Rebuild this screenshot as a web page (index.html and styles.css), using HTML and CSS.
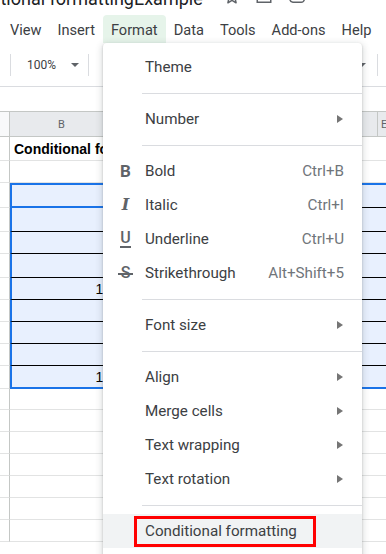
FILE: index.html
```html
<!DOCTYPE html>
<html lang="en">
<head>
    <meta charset="UTF-8">
    <meta name="viewport" content="width=device-width, initial-scale=1.0">
    <title>Format menu</title>

    <link rel="stylesheet" href="styles.css">
</head>
<body>
    <div class="app">
        <div class="doc-title">
            <span class="doc-name">Conditional formattingExample</span>
            <span class="doc-icons">
                <svg width="18" height="18" viewBox="0 0 24 24"><path d="M12 3.5l2.6 5.6 6 .6-4.5 4 1.3 6-5.4-3.2-5.4 3.2 1.3-6-4.5-4 6-.6z" fill="none" stroke="#5f6368" stroke-width="2" stroke-linejoin="round"/></svg>
                <svg width="20" height="18" viewBox="0 0 24 24"><path d="M3 6h6l2 2h10v11H3z" fill="none" stroke="#5f6368" stroke-width="2"/></svg>
                <svg width="20" height="18" viewBox="0 0 24 24"><path d="M6.5 19h11a4 4 0 0 0 .4-8A6 6 0 0 0 6.6 9.5 4.8 4.8 0 0 0 6.5 19z" fill="none" stroke="#5f6368" stroke-width="2"/></svg>
            </span>
        </div>

        <div class="menubar">
            <span class="menubar-item">View</span>
            <span class="menubar-item">Insert</span>
            <span class="menubar-item active">Format</span>
            <span class="menubar-item">Data</span>
            <span class="menubar-item">Tools</span>
            <span class="menubar-item">Add-ons</span>
            <span class="menubar-item">Help</span>
        </div>

        <div class="toolbar">
            <span class="tb-sep"></span>
            <span class="tb-zoom">100%</span>
            <span class="tb-caret"></span>
            <span class="tb-sep"></span>
            <span class="tb-caret tb-right"></span>
            <span class="tb-sep"></span>
        </div>

        <div class="formula-bar"></div>

        <div class="sheet">
            <div class="row header">
                <div class="rh"></div>
                <div class="col-head col-b">B</div>
                <div class="col-head col-c"></div>
                <div class="col-head col-d"></div>
                <div class="col-head col-e">E</div>
            </div>
            <div class="row h24">
                <div class="rh"></div>
                <div class="cell col-b title-cell"><span class="clip">Conditional formatting</span></div>
                <div class="cell rest"></div>
            </div>
            <div class="row h22">
                <div class="rh"></div>
                <div class="cell col-b"></div>
                <div class="cell rest"></div>
            </div>

            <div class="row h25 sel sel-first">
                <div class="rh"></div>
                <div class="cell col-b active-cell"></div>
                <div class="cell rest"></div>
            </div>
            <div class="row h24 sel">
                <div class="rh"></div>
                <div class="cell col-b"></div>
                <div class="cell rest"></div>
            </div>
            <div class="row h22 sel">
                <div class="rh"></div>
                <div class="cell col-b"></div>
                <div class="cell rest"></div>
            </div>
            <div class="row h24 sel">
                <div class="rh"></div>
                <div class="cell col-b"></div>
                <div class="cell rest"></div>
            </div>
            <div class="row h22 sel">
                <div class="rh"></div>
                <div class="cell col-b num">10</div>
                <div class="cell rest"></div>
            </div>
            <div class="row h22 sel">
                <div class="rh"></div>
                <div class="cell col-b"></div>
                <div class="cell rest"></div>
            </div>
            <div class="row h22 sel">
                <div class="rh"></div>
                <div class="cell col-b"></div>
                <div class="cell rest"></div>
            </div>
            <div class="row h22 sel">
                <div class="rh"></div>
                <div class="cell col-b"></div>
                <div class="cell rest"></div>
            </div>
            <div class="row h23 sel sel-last">
                <div class="rh"></div>
                <div class="cell col-b num">10</div>
                <div class="cell rest"></div>
            </div>

            <div class="row h21">
                <div class="rh"></div>
                <div class="cell col-b"></div>
                <div class="cell rest"></div>
            </div>
            <div class="row h22">
                <div class="rh"></div>
                <div class="cell col-b"></div>
                <div class="cell rest"></div>
            </div>
            <div class="row h22">
                <div class="rh"></div>
                <div class="cell col-b"></div>
                <div class="cell rest"></div>
            </div>
            <div class="row h22">
                <div class="rh"></div>
                <div class="cell col-b"></div>
                <div class="cell rest"></div>
            </div>
            <div class="row h22">
                <div class="rh"></div>
                <div class="cell col-b"></div>
                <div class="cell rest"></div>
            </div>
            <div class="row h22">
                <div class="rh"></div>
                <div class="cell col-b"></div>
                <div class="cell rest"></div>
            </div>
            <div class="row h22">
                <div class="rh"></div>
                <div class="cell col-b"></div>
                <div class="cell rest"></div>
            </div>
        </div>

        <!-- Format dropdown -->
        <div class="menu">
            <div class="menu-item">
                <span class="mi-icon"></span>
                <span class="mi-label">Theme</span>
            </div>
            <div class="menu-sep"></div>
            <div class="menu-item">
                <span class="mi-icon"></span>
                <span class="mi-label">Number</span>
                <span class="mi-arrow"></span>
            </div>
            <div class="menu-sep"></div>
            <div class="menu-item">
                <span class="mi-icon"><span class="ic-bold">B</span></span>
                <span class="mi-label">Bold</span>
                <span class="mi-key">Ctrl+B</span>
            </div>
            <div class="menu-item">
                <span class="mi-icon"><span class="ic-italic">I</span></span>
                <span class="mi-label">Italic</span>
                <span class="mi-key">Ctrl+I</span>
            </div>
            <div class="menu-item">
                <span class="mi-icon"><span class="ic-under">U</span></span>
                <span class="mi-label">Underline</span>
                <span class="mi-key">Ctrl+U</span>
            </div>
            <div class="menu-item">
                <span class="mi-icon"><span class="ic-strike">S</span></span>
                <span class="mi-label">Strikethrough</span>
                <span class="mi-key">Alt+Shift+5</span>
            </div>
            <div class="menu-sep"></div>
            <div class="menu-item">
                <span class="mi-icon"></span>
                <span class="mi-label">Font size</span>
                <span class="mi-arrow"></span>
            </div>
            <div class="menu-sep"></div>
            <div class="menu-item">
                <span class="mi-icon"></span>
                <span class="mi-label">Align</span>
                <span class="mi-arrow"></span>
            </div>
            <div class="menu-item">
                <span class="mi-icon"></span>
                <span class="mi-label">Merge cells</span>
                <span class="mi-arrow"></span>
            </div>
            <div class="menu-item">
                <span class="mi-icon"></span>
                <span class="mi-label">Text wrapping</span>
                <span class="mi-arrow"></span>
            </div>
            <div class="menu-item">
                <span class="mi-icon"></span>
                <span class="mi-label">Text rotation</span>
                <span class="mi-arrow"></span>
            </div>
            <div class="menu-sep"></div>
            <div class="menu-item hover">
                <span class="mi-icon"></span>
                <span class="mi-label">Conditional formatting</span>
                <span class="highlight-box"></span>
            </div>
        </div>
    </div>
</body>
</html>
```

FILE: styles.css
```css
body {
    margin: 0;
    background-color: white;
    font-family: Roboto, "Liberation Sans", sans-serif;
    color: #3c4043;
    overflow: hidden;
}
.app {
    position: relative;
    width: 386px;
    height: 554px;
    overflow: hidden;
}

/* title row, mostly cut off at the top */
.doc-title {
    display: flex;
    align-items: flex-start;
    height: 15px;
    white-space: nowrap;
}
.doc-name {
    margin-top: -10px;
    margin-left: -46px;
    font-size: 18px;
    line-height: 18px;
    color: #202124;
}
.doc-icons {
    display: flex;
    gap: 13px;
    margin-left: 20px;
    margin-top: -12px;
}

.menubar {
    display: flex;
    height: 28px;
    padding-left: 2px;
    font-size: 14.6px;
    white-space: nowrap;
}
.menubar-item {
    display: flex;
    align-items: center;
    flex-shrink: 0;
    padding: 2px 8px 0;
    border-radius: 4px 4px 0 0;
}
.menubar-item.active {
    background-color: #e6f4ea;
}

.toolbar {
    display: flex;
    align-items: center;
    height: 44px;
    border-bottom: 1px solid #dadce0;
    box-sizing: border-box;
    padding-left: 10px;
}
.tb-sep {
    width: 1px;
    height: 22px;
    background-color: #dadce0;
}
.tb-zoom {
    font-size: 12px;
    margin-left: 16px;
    color: #3c4043;
}
.tb-caret {
    width: 0;
    height: 0;
    border-left: 4px solid transparent;
    border-right: 4px solid transparent;
    border-top: 4px solid #5f6368;
    margin: 0 9px 0 15px;
}
.tb-right {
    margin-left: auto;
    margin-right: 11px;
}
.toolbar .tb-sep:last-child {
    margin-right: 8px;
}

.formula-bar {
    height: 24px;
}

/* grid */
.row {
    display: flex;
    box-sizing: border-box;
}
.h21 { height: 21px; }
.h22 { height: 22px; }
.h23 { height: 23px; }
.h24 { height: 24px; }
.h25 { height: 25px; }

.rh {
    width: 10px;
    flex-shrink: 0;
    box-sizing: border-box;
    border-right: 1px solid #c4c7c5;
    border-bottom: 1px solid #e2e3e3;
}
.cell {
    box-sizing: border-box;
    border-bottom: 1px solid #e2e3e3;
    font-family: "Liberation Sans", Arial, sans-serif;
    font-size: 14px;
    color: #000;
    white-space: nowrap;
    display: flex;
    align-items: center;
}
.col-b {
    width: 104px;
    flex-shrink: 0;
}
.rest {
    flex: 1;
}
.title-cell {
    font-weight: bold;
    padding-left: 4px;
}
.clip {
    overflow: hidden;
}
.num {
    justify-content: flex-end;
    padding-right: 3px;
}

.header {
    height: 26px;
    border-top: 1px solid #c4c7c5;
    border-bottom: 1px solid #c4c7c5;
}
.header .rh {
    background-color: #f8f9fa;
    border-bottom: none;
}
.col-head {
    display: flex;
    align-items: center;
    justify-content: center;
    box-sizing: border-box;
    background-color: #e8eaed;
    border-right: 1px solid #c4c7c5;
    font-size: 11px;
    color: #5f6368;
}
.col-c, .col-d {
    width: 132px;
    flex-shrink: 0;
}
.col-e {
    flex: 1;
    justify-content: flex-start;
    padding-left: 3px;
    border-right: none;
}

/* selected range */
.sel .cell {
    background-color: #e8f0fe;
    border-bottom: 1px solid #000;
}
.sel .col-b {
    border-left: 2px solid #1a73e8;
}
.sel-first .cell {
    border-top: 2px solid #1a73e8;
}
.sel-last .cell {
    border-bottom: 2px solid #1a73e8;
}
.sel .active-cell {
    border-bottom: 2px solid #1a73e8;
}

/* dropdown */
.menu {
    position: absolute;
    left: 103px;
    top: 43px;
    width: 259px;
    padding: 7px 0 12px;
    background-color: white;
    border-radius: 4px;
    box-shadow: 0 2px 6px 2px rgba(60, 64, 67, 0.15), 0 1px 2px rgba(60, 64, 67, 0.3);
    font-size: 15.2px;
    color: #3c4043;
}
.menu-item {
    position: relative;
    display: flex;
    align-items: center;
    height: 34px;
    padding-right: 18px;
}
.menu-item.hover {
    background-color: #f1f3f4;
}
.mi-icon {
    width: 42px;
    display: flex;
    justify-content: center;
    padding-left: 3px;
    box-sizing: border-box;
    color: #5f6368;
}
.mi-label {
    flex: 1;
}
.mi-key {
    color: #70757a;
}
.mi-arrow {
    width: 0;
    height: 0;
    border-top: 4px solid transparent;
    border-bottom: 4px solid transparent;
    border-left: 6px solid #757575;
    margin-right: 1px;
}
.menu-sep {
    height: 1px;
    margin: 9px 0 8px 39px;
    background-color: #dadce0;
}

.ic-bold {
    font-weight: bold;
    font-size: 17px;
    line-height: 18px;
}
.ic-italic {
    font-family: "DejaVu Serif", serif;
    font-weight: bold;
    font-style: italic;
    font-size: 16px;
    line-height: 18px;
}
.ic-under {
    font-size: 16px;
    line-height: 14px;
    font-weight: 500;
    border-bottom: 2px solid #5f6368;
    padding: 0 0 1px;
}
.ic-strike {
    position: relative;
    font-size: 16px;
    line-height: 18px;
    font-weight: 500;
}
.ic-strike::after {
    content: "";
    position: absolute;
    left: -3px;
    right: -3px;
    top: 9px;
    height: 2px;
    background-color: #5f6368;
}

/* red annotation around the hovered item */
.highlight-box {
    position: absolute;
    left: 31px;
    top: 2px;
    width: 182px;
    height: 31px;
    box-sizing: border-box;
    border: 3px solid #ff0000;
}
```
